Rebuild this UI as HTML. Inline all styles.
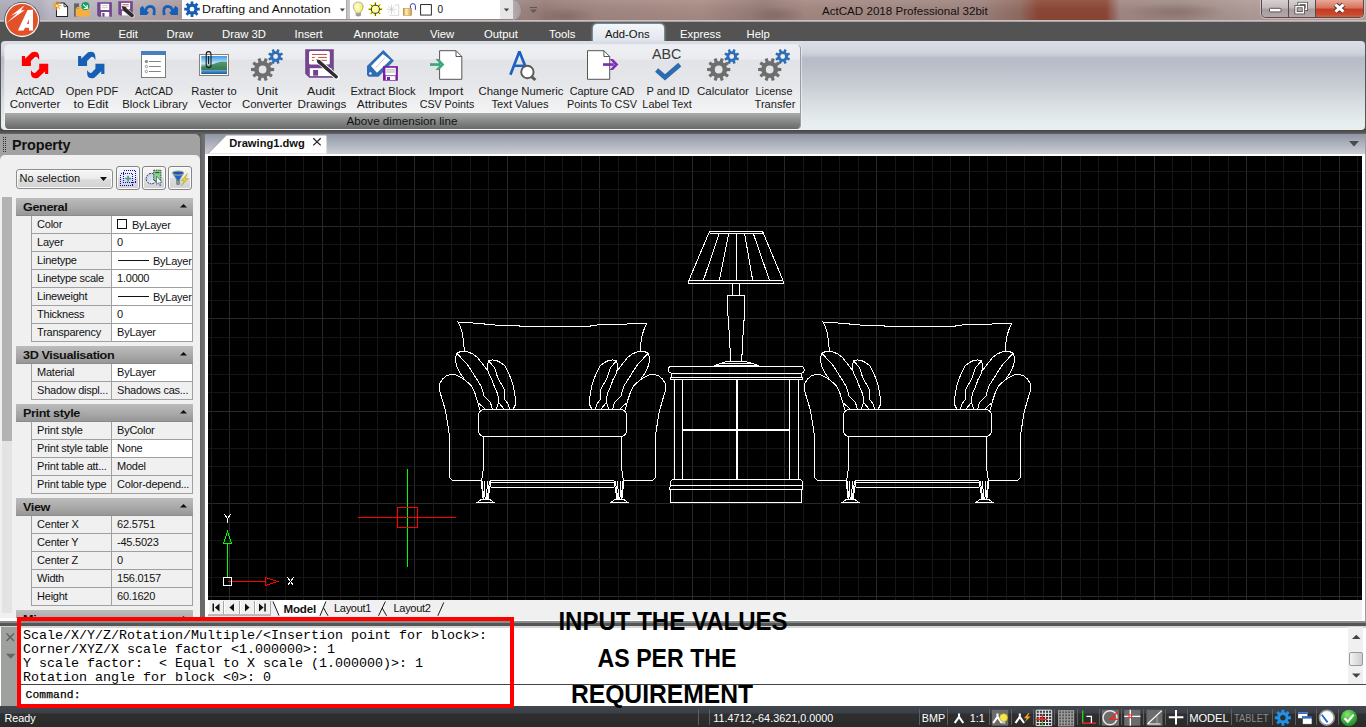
<!DOCTYPE html>
<html><head><meta charset="utf-8"><title>ActCAD 2018 Professional 32bit</title>
<style>
*{box-sizing:border-box;margin:0;padding:0}
html,body{width:1366px;height:727px;overflow:hidden;background:#555;font-family:"Liberation Sans",sans-serif;}
.a{position:absolute}
.t{position:absolute;white-space:nowrap;line-height:1}
svg{position:absolute;overflow:visible}
/* title bar */
#titlebar{left:0;top:0;width:1366px;height:22px;background:
 radial-gradient(ellipse 50px 9px at 1175px 12px,rgba(120,92,88,.45),rgba(120,92,88,0)),
 radial-gradient(ellipse 30px 8px at 565px 16px,rgba(110,85,80,.4),rgba(110,85,80,0)),
 radial-gradient(ellipse 28px 8px at 778px 15px,rgba(110,85,80,.4),rgba(110,85,80,0)),
 linear-gradient(180deg,rgba(255,255,255,.10) 0,rgba(255,255,255,0) 45%,rgba(0,0,0,.04) 100%),
 linear-gradient(90deg,#aba9b6 0px,#adabb7 40px,#b9b8c4 50px,#b7b3bc 100px,#b3a9b0 135px,#ad9ea3 160px,#a8989c 182px,#9a827e 522px,#957a74 545px,#a0857f 600px,#a68a84 700px,#937872 765px,#a28680 805px,#a08680 900px,#9b807a 980px,#8f6a60 1020px,#8a4636 1038px,#8a4636 1106px,#9f8682 1120px,#9d8884 1180px,#ad9995 1250px,#b3a19e 1366px);}
#tbline{left:0;top:20px;width:1366px;height:2px;background:linear-gradient(180deg,#d9cfd0,#9d9294)}
#menuband{left:0;top:22px;width:1366px;height:20px;background:#535353}
.mi{color:#fff;font-size:11.3px;top:28.5px}
#tabact{left:593px;top:24px;width:71px;height:18px;border-radius:4px 4px 0 0;background:linear-gradient(180deg,#f4f7fa 0,#dfe4ec 100%);box-shadow:0 0 2px 1px rgba(170,220,240,.55)}
#ribbon{left:1px;top:41px;width:1364px;height:89px;border-radius:4px;background:linear-gradient(180deg,#dadee6 0,#d6dae2 6px,#cdd1da 13px,#b6bbc7 17.5px,#b9bec9 24px,#c8cdd4 45px,#dde3e5 68px,#e7eeee 82px,#e8efee 89px);}
#group{left:4.6px;top:45px;width:796px;height:84px;border-radius:4px;overflow:hidden;background:linear-gradient(180deg,#eeeff2 0,#ebecef 14px,#e1e3e7 15px,#e6e7ea 40px,#f3f3f4 66px,#f5f5f5 68px);box-shadow:0 0 0 1px rgba(255,255,255,.45);border-right:1px solid #9a9ca2}
#glabel{left:0;top:68px;width:100%;height:16px;background:linear-gradient(180deg,#aaabab 0,#909191 6px,#777878 12px,#6a6a6a 16px);}
.rl{position:absolute;font-size:11px;color:#1a1a1a;text-align:center;line-height:13px;top:85px;transform:translateX(-50%);white-space:nowrap}

#doctabs{left:204.5px;top:134px;width:1161.5px;height:20px;background:linear-gradient(180deg,#8f95a5 0,#a2a7b4 30%,#c0c3cb 80%,#cbcdd2 100%)}
#docwhite{left:204.5px;top:153.5px;width:1161.5px;height:468.5px;background:#fff}
#black{left:208px;top:156px;width:1154px;height:444.6px;background:#000;overflow:hidden}
#laybar{left:208px;top:600px;width:1154px;height:20px;background:#f0f0f0}
.lt{font-size:11px;color:#111;top:602.8px;letter-spacing:-.3px}
#cmdsplit{left:0;top:621px;width:1366px;height:6.5px;background:linear-gradient(180deg,#8b9090 0,#858a8a 1.6px,#565656 2.2px,#555 5px,#d4d4d4 5.2px,#d8d8d8 6.5px)}
#cmdleft{left:0;top:627.3px;width:19px;height:79px;background:#9fa19f;border-left:1.4px solid #fff}
#cmdhist{left:19px;top:627.5px;width:1347px;height:57px;background:#fff}
#cmdline{left:19px;top:684px;width:1347px;height:22.5px;background:#fff;border-top:1px solid #444}
.cm{font-family:"Liberation Mono",monospace;font-size:13.33px;color:#000;left:23px;white-space:pre}
#status{left:0;top:706px;width:1366px;height:21px;background:linear-gradient(180deg,#42474f 0,#3b3f46 7px,#2f2f30 8px,#2a2a2a 100%)}
.st{font-size:10.8px;color:#fff;top:713.2px}
.sep{position:absolute;top:709px;width:1px;height:16px;background:#5e5e62}
.big{position:absolute;font-weight:bold;font-size:25.5px;color:#000;white-space:nowrap;line-height:1}

</style></head><body>
<!-- ===== TITLE BAR ===== -->
<div id="titlebar" class="a"></div>
<div id="tbline" class="a"></div>
<!-- ===== QAT ===== -->
<svg style="left:44px;top:0" width="140" height="22"><g transform="scale(0.11127)">
<!-- new -->
<path d="M112,28 H180 L212,60 V148 H112 Z" fill="#fff" stroke="#222" stroke-width="9"/><path d="M180,28 V60 H212" fill="none" stroke="#222" stroke-width="7"/>
<g stroke="#f0a020" stroke-width="9"><path d="M115,10 V92 M74,51 H156 M86,22 L144,80 M144,22 L86,80"/></g><circle cx="115" cy="51" r="9" fill="#fff3c0"/>
<!-- open -->
<rect x="270" y="30" width="45" height="120" fill="#666"/>
<path d="M285,75 H410 V150 H285 Z" fill="#f5b040"/><path d="M285,75 L300,62 H350 L360,75 Z" fill="#f5b040"/>
<circle cx="372" cy="55" r="36" fill="#12a060"/><path d="M352,40 L388,76 M388,46 V76 H358" stroke="#fff" stroke-width="10" fill="none"/>
<!-- save -->
<path d="M478,20 H610 V150 H492 L478,136 Z" fill="#74468e"/><rect x="508" y="34" width="78" height="56" fill="#fff"/><rect x="520" y="48" width="54" height="7" fill="#bbb"/><rect x="520" y="66" width="54" height="7" fill="#bbb"/><rect x="514" y="108" width="72" height="42" fill="#fff"/><rect x="524" y="116" width="20" height="34" fill="#74468e"/>
<!-- save as -->
<path d="M668,12 H798 V140 H682 L668,126 Z" fill="#74468e"/><rect x="694" y="26" width="80" height="56" fill="#fff"/><rect x="706" y="36" width="56" height="6" fill="#b5432a"/><rect x="706" y="52" width="56" height="6" fill="#b5432a"/><rect x="700" y="100" width="70" height="40" fill="#fff"/>
<path d="M722,80 L792,140" stroke="#d8d0d8" stroke-width="46" stroke-linecap="round"/><path d="M724,82 L790,138" stroke="#2a2a2a" stroke-width="34" stroke-linecap="round"/><path d="M698,54 L742,66 L712,96 Z" fill="#2a2a2a"/>
</g></svg>
<!-- workspace combo -->
<div class="a" style="left:182px;top:0;width:165px;height:19.3px;background:#fff;border-right:1px solid #aaa"></div>
<div class="a" style="left:347px;top:0;width:3px;height:19.3px;background:#c4c4c4"></div>
<div class="a" style="left:350px;top:0;width:150px;height:19.3px;background:#fff"></div>
<div class="a" style="left:500px;top:0;width:13px;height:19.3px;background:#e6e6e6"></div>
<div class="a" style="left:513px;top:0;width:9px;height:19.5px;border-radius:0 9px 9px 0/0 10px 10px 0;background:linear-gradient(90deg,#b4aab0,#a89a9c);border-right:1px solid #8d8286"></div>
<div class="t" style="left:202.3px;top:4.2px;font-size:11.8px;color:#111;letter-spacing:-.05px;transform:scaleX(1.052);transform-origin:0 0">Drafting and Annotation</div>
<div class="t" style="left:437.5px;top:5px;font-size:10px;color:#111">0</div>
<svg style="left:338px;top:7px" width="200" height="8"><path d="M1.8,1.5 H7 L4.4,4.5 Z" fill="#444"/><path d="M165.8,1.5 H171.2 L168.5,4.5 Z" fill="#444"/><path d="M192,0 H199 V1 H192 Z M192,2.5 H199 L195.5,6 Z" fill="#5a5a5a"/></svg>
<svg style="left:134px;top:0" width="50" height="22"><g transform="scale(0.052715)" fill="#1560b5">
<path d="M115,285 L115,150 L165,110 L215,195 L285,235 L240,285 Z"/><path d="M215,215 Q235,122 310,120 Q388,125 385,215 L378,285" fill="none" stroke="#1560b5" stroke-width="52"/>
<g transform="translate(950,0) scale(-1,1)"><path d="M115,285 L115,150 L165,110 L215,195 L285,235 L240,285 Z"/><path d="M215,215 Q235,122 310,120 Q388,125 385,215 L378,285" fill="none" stroke="#1560b5" stroke-width="52"/></g>
</g></svg>
<svg style="left:0;top:0" width="210" height="20"><path d="M190.59,3.78 L190.61,1.42 L193.39,1.42 L193.41,3.78 L194.83,4.37 L196.52,2.72 L198.48,4.68 L196.83,6.37 L197.42,7.79 L199.78,7.81 L199.78,10.59 L197.42,10.61 L196.83,12.03 L198.48,13.72 L196.52,15.68 L194.83,14.03 L193.41,14.62 L193.39,16.98 L190.61,16.98 L190.59,14.62 L189.17,14.03 L187.48,15.68 L185.52,13.72 L187.17,12.03 L186.58,10.61 L184.22,10.59 L184.22,7.81 L186.58,7.79 L187.17,6.37 L185.52,4.68 L187.48,2.72 L189.17,4.37 Z M194.40,9.20 A2.4,2.4 0 1,0 189.60,9.20 A2.4,2.4 0 1,0 194.40,9.20 Z" fill="#1560b5" fill-rule="evenodd"/></svg><!--QAT_GEAR--><svg style="left:346px;top:0" width="110" height="22"><defs><radialGradient id="bulb" cx=".4" cy=".35" r=".7"><stop offset="0" stop-color="#ffffe8"/><stop offset=".6" stop-color="#f4f07a"/><stop offset="1" stop-color="#d8c840"/></radialGradient><linearGradient id="lockg" x1="0" y1="0" x2="1" y2="0"><stop offset="0" stop-color="#c89030"/><stop offset=".35" stop-color="#fff0c8"/><stop offset="1" stop-color="#c89838"/></linearGradient></defs>
<g transform="scale(0.080515)">
<path d="M152,25 Q215,28 214,88 Q212,120 182,150 V190 Q152,215 124,190 V150 Q92,120 90,88 Q90,28 152,25 Z" fill="url(#bulb)" stroke="#8a8a70" stroke-width="7"/><rect x="126" y="158" width="54" height="40" rx="8" fill="#8c8c8c"/><path d="M126,172 H180 M126,186 H180" stroke="#d8d8d8" stroke-width="5"/>
<g stroke="#111" stroke-width="9" fill="none"><path d="M365,28 V202 M278,115 H452 M305,55 L425,175 M425,55 L305,175" stroke="#ffff00" stroke-width="22"/><path d="M365,32 V198 M282,115 H448 M309,59 L421,171 M421,59 L309,171"/></g><circle cx="365" cy="115" r="50" fill="#ffff60" stroke="#111" stroke-width="10"/><circle cx="365" cy="115" r="38" fill="#fffff0" opacity=".55"/>
<g stroke="#c2c2c2" stroke-width="8" fill="none"><path d="M565,55 V175 M505,115 H625 M522,72 L608,158 M608,72 L522,158"/><path d="M610,62 H655 V190 H540"/></g>
<path d="M800,105 V70 Q802,45 830,45 Q862,47 862,72 V122" fill="none" stroke="#2020a0" stroke-width="11"/><rect x="710" y="102" width="106" height="90" fill="url(#lockg)" stroke="#b07820" stroke-width="5"/>
<rect x="927" y="57" width="133" height="130" fill="#fff" stroke="#111" stroke-width="11"/>
</g></svg>


<div class="t" style="left:822px;top:4.9px;font-size:11.6px;color:#111">ActCAD 2018 Professional 32bit</div>
<!-- window buttons -->
<div class="a" style="left:1260.5px;top:0;width:103px;height:17.5px;border-radius:0 0 5px 5px;border:1px solid #5a4a4a;border-top:none;overflow:hidden;box-shadow:0 0 0 1px rgba(255,255,255,.35)">
<div class="a" style="left:0;top:0;width:27px;height:17.5px;background:linear-gradient(180deg,#d8d0d2 0,#c2b8ba 45%,#a89c9e 50%,#b5a9ab 100%);border-right:1px solid #5a4a4a"></div>
<div class="a" style="left:27px;top:0;width:27.5px;height:17.5px;background:linear-gradient(180deg,#d8d0d2 0,#c2b8ba 45%,#a89c9e 50%,#b5a9ab 100%);border-right:1px solid #5a4a4a"></div>
<div class="a" style="left:54.5px;top:0;width:48px;height:17.5px;background:linear-gradient(180deg,#e8a898 0,#d8705a 45%,#c23a22 50%,#c84a30 80%,#d86a48 100%)"></div>
</div>
<svg style="left:1260px;top:0" width="104" height="18"><rect x="9.5" y="8.3" width="11.5" height="3.6" rx=".8" fill="#fff" stroke="#4a4444" stroke-width=".9"/>
<rect x="39" y="3.4" width="7.4" height="6" fill="none" stroke="#4a4444" stroke-width="3"/><rect x="39" y="3.4" width="7.4" height="6" fill="none" stroke="#fff" stroke-width="1.5"/>
<rect x="36" y="6.6" width="7.4" height="6.2" fill="#b4a8aa" stroke="#4a4444" stroke-width="3"/><rect x="36" y="6.6" width="7.4" height="6.2" fill="none" stroke="#fff" stroke-width="1.5"/>
<path d="M75.5,4.6 L83.5,11.6 M83.5,4.6 L75.5,11.6" stroke="#5a2a24" stroke-width="5"/><path d="M75.5,4.6 L83.5,11.6 M83.5,4.6 L75.5,11.6" stroke="#fff" stroke-width="3.1"/></svg>

<!-- ===== MENU ===== -->
<div id="menuband" class="a"></div>
<div id="tabact" class="a"></div>
<div class="t mi" style="left:60px">Home</div>
<div class="t mi" style="left:118.5px">Edit</div>
<div class="t mi" style="left:166.5px">Draw</div>
<div class="t mi" style="left:222px">Draw 3D</div>
<div class="t mi" style="left:294.5px">Insert</div>
<div class="t mi" style="left:353.5px">Annotate</div>
<div class="t mi" style="left:430px">View</div>
<div class="t mi" style="left:484px">Output</div>
<div class="t mi" style="left:549px">Tools</div>
<div class="t mi" style="left:605px;color:#111">Add-Ons</div>
<div class="t mi" style="left:680px">Express</div>
<div class="t mi" style="left:746.5px">Help</div>
<!-- ===== RIBBON ===== -->
<div class="a" style="left:0;top:129px;width:1366px;height:5.3px;background:linear-gradient(180deg,#454545 0,#4a4a4a 40%,#666 100%)"></div>
<div id="ribbon" class="a"></div>
<div id="group" class="a"><div id="glabel" class="a"></div></div>
<div class="rl" style="left:34.8px;top:85px;transform:translateX(-50%) scaleX(0.984)">ActCAD</div>
<div class="rl" style="left:35.1px;top:98px;transform:translateX(-50%) scaleX(1.046)">Converter</div>
<div class="rl" style="left:91.5px;top:85px;transform:translateX(-50%) scaleX(1.006)">Open PDF</div>
<div class="rl" style="left:91.2px;top:98px;transform:translateX(-50%) scaleX(1.125)">to Edit</div>
<div class="rl" style="left:154.1px;top:85px;transform:translateX(-50%) scaleX(0.969)">ActCAD</div>
<div class="rl" style="left:154.5px;top:98px;transform:translateX(-50%) scaleX(1.030)">Block Library</div>
<div class="rl" style="left:214.0px;top:85px;transform:translateX(-50%) scaleX(1.015)">Raster to</div>
<div class="rl" style="left:214.6px;top:98px;transform:translateX(-50%) scaleX(1.061)">Vector</div>
<div class="rl" style="left:267.0px;top:85px;transform:translateX(-50%) scaleX(1.104)">Unit</div>
<div class="rl" style="left:267.0px;top:98px;transform:translateX(-50%) scaleX(1.037)">Converter</div>
<div class="rl" style="left:321.1px;top:85px;transform:translateX(-50%) scaleX(1.120)">Audit</div>
<div class="rl" style="left:321.6px;top:98px;transform:translateX(-50%) scaleX(1.064)">Drawings</div>
<div class="rl" style="left:382.6px;top:85px;transform:translateX(-50%) scaleX(1.016)">Extract Block</div>
<div class="rl" style="left:382.4px;top:98px;transform:translateX(-50%) scaleX(1.091)">Attributes</div>
<div class="rl" style="left:445.8px;top:85px;transform:translateX(-50%) scaleX(1.109)">Import</div>
<div class="rl" style="left:446.5px;top:98px;transform:translateX(-50%) scaleX(0.971)">CSV Points</div>
<div class="rl" style="left:520.8px;top:85px;transform:translateX(-50%) scaleX(1.029)">Change Numeric</div>
<div class="rl" style="left:520.2px;top:98px;transform:translateX(-50%) scaleX(1.017)">Text Values</div>
<div class="rl" style="left:601.8px;top:85px;transform:translateX(-50%) scaleX(0.989)">Capture CAD</div>
<div class="rl" style="left:602.2px;top:98px;transform:translateX(-50%) scaleX(0.987)">Points To CSV</div>
<div class="rl" style="left:667.8px;top:85px;transform:translateX(-50%) scaleX(1.009)">P and ID</div>
<div class="rl" style="left:667.1px;top:98px;transform:translateX(-50%) scaleX(0.987)">Label Text</div>
<div class="rl" style="left:723.4px;top:85px;transform:translateX(-50%) scaleX(1.048)">Calculator</div>
<div class="rl" style="left:774.3px;top:85px;transform:translateX(-50%) scaleX(0.970)">License</div>
<div class="rl" style="left:774.8px;top:98px;transform:translateX(-50%) scaleX(1.011)">Transfer</div>
<div class="rl" style="left:402.4px;top:115px;color:#111;transform:translateX(-50%) scaleX(1.06)">Above dimension line</div>
<svg class="a" style="left:0;top:0" width="1366" height="135">
<g transform="translate(10,44) scale(0.08347)" fill="#ff0000"><path d="M142,145 L180,145 L180,178 L262,100 Q300,84 330,102 Q356,128 348,192 Q328,146 300,156 L250,205 L250,265 L142,265 Z"/><path d="M142,145 L180,145 L180,178 L262,100 Q300,84 330,102 Q356,128 348,192 Q328,146 300,156 L250,205 L250,265 L142,265 Z" transform="rotate(180 300 251.5)"/></g>
<g transform="translate(66.2,44) scale(0.08347)" fill="#1560b5"><path d="M142,145 L180,145 L180,178 L262,100 Q300,84 330,102 Q356,128 348,192 Q328,146 300,156 L250,205 L250,265 L142,265 Z"/><path d="M142,145 L180,145 L180,178 L262,100 Q300,84 330,102 Q356,128 348,192 Q328,146 300,156 L250,205 L250,265 L142,265 Z" transform="rotate(180 300 251.5)"/></g>
<rect x="141.5" y="51.5" width="24" height="26" fill="#fff" stroke="#7a7a7a" stroke-width="1"/>
<rect x="141" y="51" width="25" height="4" fill="#4a7eb8"/>
<circle cx="146.4" cy="61.5" r="1.2" fill="#8a8a8a" stroke="#777" stroke-width=".7"/>
<rect x="149" y="61.1" width="11.8" height=".9" fill="#777"/>
<circle cx="146.4" cy="66.5" r="1.2" fill="#fff" stroke="#777" stroke-width=".7"/>
<rect x="149" y="66.1" width="11.8" height=".9" fill="#777"/>
<circle cx="146.4" cy="71.5" r="1.2" fill="#fff" stroke="#777" stroke-width=".7"/>
<rect x="149" y="71.1" width="11.8" height=".9" fill="#777"/>
<defs><linearGradient id="sky" x1="0" y1="0" x2="0" y2="1"><stop offset="0" stop-color="#3d9ae6"/><stop offset=".42" stop-color="#c4e6f7"/><stop offset=".62" stop-color="#3f8456"/><stop offset=".78" stop-color="#3a7a66"/><stop offset=".8" stop-color="#5aa0d0"/><stop offset="1" stop-color="#1d5a9c"/></linearGradient></defs>
<rect x="199.5" y="54.5" width="29" height="21" fill="#fff" stroke="#8a807a" stroke-width="1"/>
<rect x="201.2" y="56" width="25.8" height="18" fill="url(#sky)"/>
<path d="M201.2,68 Q210,66 216,63 Q222,61 227,62 L227,68 Z" fill="#3f8456" opacity=".85"/>
<path d="M206.2,65 V54.5 Q206.2,51.6 208.6,51.6 Q211,51.6 211,54.5 V65.5 Q211,67.6 208.8,67.6 Q206.4,67.6 206.2,65 M208.6,56 V64" fill="none" stroke="#1a1a1a" stroke-width="1.1"/>
<path d="M263.60,61.16 L264.72,57.99 L267.65,58.95 L266.69,62.16 L268.31,63.34 L271.08,61.44 L272.89,63.93 L270.22,65.97 L270.84,67.87 L274.20,67.96 L274.20,71.04 L270.84,71.13 L270.22,73.03 L272.89,75.07 L271.08,77.56 L268.31,75.66 L266.69,76.84 L267.65,80.05 L264.72,81.01 L263.60,77.84 L261.60,77.84 L260.48,81.01 L257.55,80.05 L258.51,76.84 L256.89,75.66 L254.12,77.56 L252.31,75.07 L254.98,73.03 L254.36,71.13 L251.00,71.04 L251.00,67.96 L254.36,67.87 L254.98,65.97 L252.31,63.93 L254.12,61.44 L256.89,63.34 L258.51,62.16 L257.55,58.95 L260.48,57.99 L261.60,61.16 Z M266.50,69.50 A3.9,3.9 0 1,0 258.70,69.50 A3.9,3.9 0 1,0 266.50,69.50 Z" fill="#6e6e6e" fill-rule="evenodd"/><path d="M276.39,51.26 L277.32,49.10 L279.62,50.05 L278.75,52.24 L279.86,53.35 L282.05,52.48 L283.00,54.78 L280.84,55.71 L280.84,57.29 L283.00,58.22 L282.05,60.52 L279.86,59.65 L278.75,60.76 L279.62,62.95 L277.32,63.90 L276.39,61.74 L274.81,61.74 L273.88,63.90 L271.58,62.95 L272.45,60.76 L271.34,59.65 L269.15,60.52 L268.20,58.22 L270.36,57.29 L270.36,55.71 L268.20,54.78 L269.15,52.48 L271.34,53.35 L272.45,52.24 L271.58,50.05 L273.88,49.10 L274.81,51.26 Z M278.00,56.50 A2.4,2.4 0 1,0 273.20,56.50 A2.4,2.4 0 1,0 278.00,56.50 Z" fill="#2f6eb5" fill-rule="evenodd"/>
<path d="M305.2,49.2 H333.8 V77.8 H309.2 L305.2,73.8 Z" fill="#74468e"/>
<rect x="309" y="51.1" width="20.8" height="13.4" rx="1.5" fill="#fff"/>
<rect x="311.9" y="53.949999999999996" width="15" height=".9" fill="#b5432a"/>
<rect x="311.9" y="56.949999999999996" width="15" height=".9" fill="#b5432a"/>
<rect x="311.9" y="59.849999999999994" width="15" height=".9" fill="#b5432a"/>
<rect x="309.8" y="68.2" width="21.7" height="7.9" fill="#fff"/>
<rect x="313.1" y="70" width="5" height="5.7" fill="#74468e"/>
<path d="M316.5,59.4 L336.9,77.4" stroke="#fff" stroke-width="5.2" stroke-linecap="round"/>
<path d="M318.8,61.6 L336.2,76.8" stroke="#2e2e2e" stroke-width="3.4" stroke-linecap="round"/>
<path d="M316.2,59 L320.5,60.8 L318.3,63.2 Z" fill="#2e2e2e"/>
<path d="M383.3,50 L393.9,60.7 L378.5,76.7 H368.7 L367,74.9 V65.9 Z" fill="#2f6db5"/>
<path d="M382.9,54 L390.4,59.9 L377,72.8 L371,66.1 Z" fill="#fff"/>
<path d="M385,57.8 L375.4,68.2" stroke="#c9c9c9" stroke-width="1"/>
<circle cx="370.4" cy="73.4" r="1.2" fill="#fff"/>
<rect x="383" y="66.1" width="14.9" height="14.6" fill="#7a1fa2"/>
<rect x="385.4" y="67.8" width="10.4" height="7.5" fill="#fff"/>
<rect x="386.3" y="69.5" width="8.6" height=".8" fill="#999"/><rect x="386.3" y="71.6" width="8.6" height=".8" fill="#999"/>
<rect x="385.8" y="76.1" width="9.6" height="3.9" fill="#fff"/><rect x="387" y="77" width="3" height="3" fill="#7a1fa2"/>
<path d="M439.6,50.7 H456.0 L461.8,56.5 V79.3 H439.6 Z" fill="#fff" stroke="#555" stroke-width="1"/><path d="M456.0,50.7 V56.5 H461.8" fill="none" stroke="#555" stroke-width="1"/>
<path d="M430,63.2 H440 V65.9 H430 Z" fill="#3fa57a"/><path d="M435.5,59 H439 L444.4,64.5 L439,69.9 H435.5 L440.5,64.5 Z" fill="#3fa57a"/>
<path d="M510.4,74.7 L519.4,51.6 L527.6,72" fill="none" stroke="#1f5fbf" stroke-width="2.7" stroke-linejoin="bevel"/>
<path d="M514,65.8 H526" stroke="#1f5fbf" stroke-width="2.5"/>
<circle cx="527.4" cy="72" r="6.2" fill="#fff" stroke="#5a5a5a" stroke-width="1.9"/>
<path d="M531.8,76.8 L535.4,80" stroke="#5a5a5a" stroke-width="3"/>
<path d="M587.5,50.7 H603.9 L609.7,56.5 V79.3 H587.5 Z" fill="#fff" stroke="#555" stroke-width="1"/><path d="M603.9,50.7 V56.5 H609.7" fill="none" stroke="#555" stroke-width="1"/>
<path d="M603,63.2 H613.8 V65.9 H603 Z" fill="#7b2fb5"/><path d="M609.6,59 H613 L618.4,64.5 L613,69.9 H609.6 L614.6,64.5 Z" fill="#7b2fb5"/>
<text x="652" y="59.4" font-family="Liberation Sans, sans-serif" font-size="14.5" fill="#3a3a3a" textLength="29.4" lengthAdjust="spacingAndGlyphs">ABC</text>
<path d="M656.6,69.9 L665,77.3 L679.8,64.6" fill="none" stroke="#2e6cb0" stroke-width="4.7"/>
<path d="M719.70,61.16 L720.82,57.99 L723.75,58.95 L722.79,62.16 L724.41,63.34 L727.18,61.44 L728.99,63.93 L726.32,65.97 L726.94,67.87 L730.30,67.96 L730.30,71.04 L726.94,71.13 L726.32,73.03 L728.99,75.07 L727.18,77.56 L724.41,75.66 L722.79,76.84 L723.75,80.05 L720.82,81.01 L719.70,77.84 L717.70,77.84 L716.58,81.01 L713.65,80.05 L714.61,76.84 L712.99,75.66 L710.22,77.56 L708.41,75.07 L711.08,73.03 L710.46,71.13 L707.10,71.04 L707.10,67.96 L710.46,67.87 L711.08,65.97 L708.41,63.93 L710.22,61.44 L712.99,63.34 L714.61,62.16 L713.65,58.95 L716.58,57.99 L717.70,61.16 Z M722.60,69.50 A3.9,3.9 0 1,0 714.80,69.50 A3.9,3.9 0 1,0 722.60,69.50 Z" fill="#6e6e6e" fill-rule="evenodd"/><path d="M732.49,51.26 L733.42,49.10 L735.72,50.05 L734.85,52.24 L735.96,53.35 L738.15,52.48 L739.10,54.78 L736.94,55.71 L736.94,57.29 L739.10,58.22 L738.15,60.52 L735.96,59.65 L734.85,60.76 L735.72,62.95 L733.42,63.90 L732.49,61.74 L730.91,61.74 L729.98,63.90 L727.68,62.95 L728.55,60.76 L727.44,59.65 L725.25,60.52 L724.30,58.22 L726.46,57.29 L726.46,55.71 L724.30,54.78 L725.25,52.48 L727.44,53.35 L728.55,52.24 L727.68,50.05 L729.98,49.10 L730.91,51.26 Z M734.10,56.50 A2.4,2.4 0 1,0 729.30,56.50 A2.4,2.4 0 1,0 734.10,56.50 Z" fill="#2f6eb5" fill-rule="evenodd"/>
<path d="M770.70,61.16 L771.82,57.99 L774.75,58.95 L773.79,62.16 L775.41,63.34 L778.18,61.44 L779.99,63.93 L777.32,65.97 L777.94,67.87 L781.30,67.96 L781.30,71.04 L777.94,71.13 L777.32,73.03 L779.99,75.07 L778.18,77.56 L775.41,75.66 L773.79,76.84 L774.75,80.05 L771.82,81.01 L770.70,77.84 L768.70,77.84 L767.58,81.01 L764.65,80.05 L765.61,76.84 L763.99,75.66 L761.22,77.56 L759.41,75.07 L762.08,73.03 L761.46,71.13 L758.10,71.04 L758.10,67.96 L761.46,67.87 L762.08,65.97 L759.41,63.93 L761.22,61.44 L763.99,63.34 L765.61,62.16 L764.65,58.95 L767.58,57.99 L768.70,61.16 Z M773.60,69.50 A3.9,3.9 0 1,0 765.80,69.50 A3.9,3.9 0 1,0 773.60,69.50 Z" fill="#6e6e6e" fill-rule="evenodd"/><path d="M783.49,51.26 L784.42,49.10 L786.72,50.05 L785.85,52.24 L786.96,53.35 L789.15,52.48 L790.10,54.78 L787.94,55.71 L787.94,57.29 L790.10,58.22 L789.15,60.52 L786.96,59.65 L785.85,60.76 L786.72,62.95 L784.42,63.90 L783.49,61.74 L781.91,61.74 L780.98,63.90 L778.68,62.95 L779.55,60.76 L778.44,59.65 L776.25,60.52 L775.30,58.22 L777.46,57.29 L777.46,55.71 L775.30,54.78 L776.25,52.48 L778.44,53.35 L779.55,52.24 L778.68,50.05 L780.98,49.10 L781.91,51.26 Z M785.10,56.50 A2.4,2.4 0 1,0 780.30,56.50 A2.4,2.4 0 1,0 785.10,56.50 Z" fill="#2f6eb5" fill-rule="evenodd"/>
</svg>
<!-- ===== LOGO ===== -->
<svg style="left:0;top:0" width="60" height="44"><g transform="scale(0.060533)">
<circle cx="365" cy="330" r="296" fill="#4a4a4a"/>
<circle cx="365" cy="330" r="284" fill="#f4f4f4"/>
<circle cx="365" cy="330" r="262" fill="#e2512a"/>
<path d="M295,505 L455,165 L545,160 L545,505 L480,505 L480,460 L415,460 L390,505 Z M446,396 L478,396 L478,318 Z" fill="#fff" fill-rule="evenodd"/>
<path d="M100,385 L290,215 L180,262 L405,88 L345,172 L412,165 Z" fill="#fff"/>
</g></svg>

<div class="a" style="left:0;top:0;width:208px;height:618.2px;overflow:hidden"><div class="a" style="left:0;top:134px;width:200px;height:30px;background:#a2a2a2;border-radius:0 5px 0 0"></div>
<div class="a" style="left:0;top:155px;width:200px;height:464px;background:#f0f0f0;border-radius:5px 5px 0 0"></div>
<div class="a" style="left:3px;top:137px;width:3px;height:15px;background:repeating-linear-gradient(180deg,#333 0,#333 1px,transparent 1px,transparent 2px),transparent;"></div>
<div class="a" style="left:4px;top:137px;width:1px;height:15px;background:#a2a2a2"></div>
<div class="t" style="left:12px;top:138px;font-size:14.4px;font-weight:bold;color:#111;letter-spacing:-.1px">Property</div>
<div class="a" style="left:16px;top:168.5px;width:97px;height:20px;border:1px solid #8e8e8e;border-radius:3px;background:linear-gradient(180deg,#f6f6f6 0,#ebebeb 50%,#dddddd 51%,#d2d2d2 100%);box-shadow:inset 0 0 0 1px #fbfbfb"></div>
<div class="t" style="left:19.6px;top:173px;font-size:11px;color:#111">No selection</div>
<svg style="left:100px;top:177px" width="8" height="5"><path d="M0,0 H7 L3.5,4 Z" fill="#111"/></svg>
<div class="a" style="left:116.2px;top:166px;width:23.6px;height:23.6px;border:1.1px solid #848484;border-radius:3px;background:linear-gradient(180deg,#f6f6f6 0,#ebebeb 50%,#dddddd 51%,#d2d2d2 100%);box-shadow:inset 0 0 0 1px #fbfbfb"></div>
<div class="a" style="left:142.2px;top:166px;width:23.6px;height:23.6px;border:1.1px solid #848484;border-radius:3px;background:linear-gradient(180deg,#f6f6f6 0,#ebebeb 50%,#dddddd 51%,#d2d2d2 100%);box-shadow:inset 0 0 0 1px #fbfbfb"></div>
<div class="a" style="left:168.3px;top:166px;width:23.6px;height:23.6px;border:1.1px solid #848484;border-radius:3px;background:linear-gradient(180deg,#f6f6f6 0,#ebebeb 50%,#dddddd 51%,#d2d2d2 100%);box-shadow:inset 0 0 0 1px #fbfbfb"></div>
<svg style="left:0;top:0" width="200" height="195"><defs><linearGradient id="pc" x1="0" y1="0" x2="1" y2="1"><stop offset="0" stop-color="#b8c4ec"/><stop offset="1" stop-color="#ffffff"/></linearGradient></defs><g fill="none" stroke="#0a0ac0" stroke-width="1" stroke-dasharray="1,1" shape-rendering="crispEdges"><rect x="120.5" y="173.5" width="12" height="12"/><rect x="123.5" y="170.5" width="12" height="12"/></g><path d="M125.3,178.6 H131 M128.1,175.8 V181.5" stroke="#2a9a9a" stroke-width="1.5"/><path d="M128.1,177.8 V179.5 M127.2,178.6 H129" stroke="#8a8a8a" stroke-width="1"/><circle cx="151.4" cy="178.6" r="5.2" fill="url(#pc)" stroke="#1a1a2a" stroke-width="1" stroke-dasharray="1.6,1.1"/><rect x="153.7" y="170.2" width="7.2" height="10.4" fill="#86d486" stroke="#1a2a3a" stroke-width=".9" stroke-dasharray="1.4,.9"/><path d="M155.2,172.6 H159.4" stroke="#2a3a3a" stroke-width="1"/><path d="M156.5,176 V184.6 L158.5,182.8 L159.8,185.8 L161,185.3 L159.8,182.4 L162,182.2 Z" fill="#f4f6fa" stroke="#56708a" stroke-width=".8"/><path d="M172.8,173.4 Q178.1,176.6 183.4,173.4 L179.6,179.6 V184.2 Q178.1,185.4 176.6,184.2 V179.6 Z" fill="#1a64c4" stroke="#8a8a8a" stroke-width=".9"/><ellipse cx="178.1" cy="173.1" rx="5.4" ry="2" fill="#0e58b8" stroke="#9a9a9a" stroke-width="1.1"/><rect x="176.6" y="180.5" width="3" height="4" fill="#8e8e8e"/><path d="M187.3,173.6 L181.6,180.6 H184.4 L181.4,185.8 L188,178.6 H185.2 Z" fill="#f8d428" stroke="#8aa020" stroke-width=".5"/></svg>
<div class="a" style="left:2px;top:197px;width:9.5px;height:416px;background:#e3e3e3"></div>
<div class="a" style="left:2px;top:197px;width:9.5px;height:244px;background:#b3b3b3"></div>
<div class="a" style="left:16px;top:197.5px;width:176.5px;height:18px;background:linear-gradient(180deg,#bcbcbc 0,#a9a9a9 55%,#979797 100%);border-bottom:1px solid #8b8b8b"></div>
<div class="t" style="left:22.5px;top:200.7px;font-size:11.6px;font-weight:bold;color:#111;letter-spacing:-.35px;transform:scaleX(1.09);transform-origin:0 0">General</div>
<svg style="left:180px;top:203.5px" width="8" height="4"><path d="M0,3.6 L3.5,0 L7,3.6 Z" fill="#111"/></svg>
<div class="a" style="left:31px;top:215.5px;width:161.5px;height:126px;background:#a0a0a0"></div>
<div class="a" style="left:32px;top:215.5px;width:79px;height:17px;background:#f0f0f0"></div>
<div class="a" style="left:112px;top:215.5px;width:79.5px;height:17px;background:#fff"></div>
<div class="t" style="left:37.1px;top:218.5px;font-size:11px;color:#111;letter-spacing:-.25px">Color</div>
<div class="a" style="left:116.5px;top:219.0px;width:10px;height:10px;border:1px solid #111;background:#fff"></div>
<div class="t" style="left:132px;top:220.0px;font-size:11px;color:#111;letter-spacing:-.25px">ByLayer</div>
<div class="a" style="left:32px;top:233.5px;width:79px;height:17px;background:#f0f0f0"></div>
<div class="a" style="left:112px;top:233.5px;width:79.5px;height:17px;background:#fff"></div>
<div class="t" style="left:37.1px;top:236.5px;font-size:11px;color:#111;letter-spacing:-.25px">Layer</div>
<div class="t" style="left:117.1px;top:236.5px;font-size:11px;color:#111;letter-spacing:-.25px">0</div>
<div class="a" style="left:32px;top:251.5px;width:79px;height:17px;background:#f0f0f0"></div>
<div class="a" style="left:112px;top:251.5px;width:79.5px;height:17px;background:#fff"></div>
<div class="t" style="left:37.1px;top:254.5px;font-size:11px;color:#111;letter-spacing:-.25px">Linetype</div>
<div class="a" style="left:117.5px;top:259.5px;width:31px;height:1px;background:#111"></div>
<div class="t" style="left:153px;top:256.0px;font-size:11px;color:#111;letter-spacing:-.25px">ByLayer</div>
<div class="a" style="left:32px;top:269.5px;width:79px;height:17px;background:#f0f0f0"></div>
<div class="a" style="left:112px;top:269.5px;width:79.5px;height:17px;background:#fff"></div>
<div class="t" style="left:37.1px;top:272.5px;font-size:11px;color:#111;letter-spacing:-.25px">Linetype scale</div>
<div class="t" style="left:117.1px;top:272.5px;font-size:11px;color:#111;letter-spacing:-.25px">1.0000</div>
<div class="a" style="left:32px;top:287.5px;width:79px;height:17px;background:#f0f0f0"></div>
<div class="a" style="left:112px;top:287.5px;width:79.5px;height:17px;background:#fff"></div>
<div class="t" style="left:37.1px;top:290.5px;font-size:11px;color:#111;letter-spacing:-.25px">Lineweight</div>
<div class="a" style="left:117.5px;top:295.5px;width:31px;height:1px;background:#111"></div>
<div class="t" style="left:153px;top:292.0px;font-size:11px;color:#111;letter-spacing:-.25px">ByLayer</div>
<div class="a" style="left:32px;top:305.5px;width:79px;height:17px;background:#f0f0f0"></div>
<div class="a" style="left:112px;top:305.5px;width:79.5px;height:17px;background:#fff"></div>
<div class="t" style="left:37.1px;top:308.5px;font-size:11px;color:#111;letter-spacing:-.25px">Thickness</div>
<div class="t" style="left:117.1px;top:308.5px;font-size:11px;color:#111;letter-spacing:-.25px">0</div>
<div class="a" style="left:32px;top:323.5px;width:79px;height:17px;background:#f0f0f0"></div>
<div class="a" style="left:112px;top:323.5px;width:79.5px;height:17px;background:#fff"></div>
<div class="t" style="left:37.1px;top:326.5px;font-size:11px;color:#111;letter-spacing:-.25px">Transparency</div>
<div class="t" style="left:117.1px;top:326.5px;font-size:11px;color:#111;letter-spacing:-.25px">ByLayer</div>
<div class="a" style="left:16px;top:345.5px;width:176.5px;height:18px;background:linear-gradient(180deg,#bcbcbc 0,#a9a9a9 55%,#979797 100%);border-bottom:1px solid #8b8b8b"></div>
<div class="t" style="left:22.5px;top:348.7px;font-size:11.6px;font-weight:bold;color:#111;letter-spacing:-.35px;transform:scaleX(1.09);transform-origin:0 0">3D Visualisation</div>
<svg style="left:180px;top:351.5px" width="8" height="4"><path d="M0,3.6 L3.5,0 L7,3.6 Z" fill="#111"/></svg>
<div class="a" style="left:31px;top:363.5px;width:161.5px;height:36px;background:#a0a0a0"></div>
<div class="a" style="left:32px;top:363.5px;width:79px;height:17px;background:#f0f0f0"></div>
<div class="a" style="left:112px;top:363.5px;width:79.5px;height:17px;background:#fff"></div>
<div class="t" style="left:37.1px;top:366.5px;font-size:11px;color:#111;letter-spacing:-.25px">Material</div>
<div class="t" style="left:117.1px;top:366.5px;font-size:11px;color:#111;letter-spacing:-.25px">ByLayer</div>
<div class="a" style="left:32px;top:381.5px;width:79px;height:17px;background:#f0f0f0"></div>
<div class="a" style="left:112px;top:381.5px;width:79.5px;height:17px;background:#f0f0f0"></div>
<div class="t" style="left:37.1px;top:384.5px;font-size:11px;color:#111;letter-spacing:-.25px">Shadow displ...</div>
<div class="t" style="left:117.1px;top:384.5px;font-size:11px;color:#111;letter-spacing:-.25px">Shadows cas...</div>
<div class="a" style="left:16px;top:403.5px;width:176.5px;height:18px;background:linear-gradient(180deg,#bcbcbc 0,#a9a9a9 55%,#979797 100%);border-bottom:1px solid #8b8b8b"></div>
<div class="t" style="left:22.5px;top:406.7px;font-size:11.6px;font-weight:bold;color:#111;letter-spacing:-.35px;transform:scaleX(1.09);transform-origin:0 0">Print style</div>
<svg style="left:180px;top:409.5px" width="8" height="4"><path d="M0,3.6 L3.5,0 L7,3.6 Z" fill="#111"/></svg>
<div class="a" style="left:31px;top:421.5px;width:161.5px;height:72px;background:#a0a0a0"></div>
<div class="a" style="left:32px;top:421.5px;width:79px;height:17px;background:#f0f0f0"></div>
<div class="a" style="left:112px;top:421.5px;width:79.5px;height:17px;background:#f0f0f0"></div>
<div class="t" style="left:37.1px;top:424.5px;font-size:11px;color:#111;letter-spacing:-.25px">Print style</div>
<div class="t" style="left:117.1px;top:424.5px;font-size:11px;color:#111;letter-spacing:-.25px">ByColor</div>
<div class="a" style="left:32px;top:439.5px;width:79px;height:17px;background:#f0f0f0"></div>
<div class="a" style="left:112px;top:439.5px;width:79.5px;height:17px;background:#fff"></div>
<div class="t" style="left:37.1px;top:442.5px;font-size:11px;color:#111;letter-spacing:-.25px">Print style table</div>
<div class="t" style="left:117.1px;top:442.5px;font-size:11px;color:#111;letter-spacing:-.25px">None</div>
<div class="a" style="left:32px;top:457.5px;width:79px;height:17px;background:#f0f0f0"></div>
<div class="a" style="left:112px;top:457.5px;width:79.5px;height:17px;background:#f0f0f0"></div>
<div class="t" style="left:37.1px;top:460.5px;font-size:11px;color:#111;letter-spacing:-.25px">Print table att...</div>
<div class="t" style="left:117.1px;top:460.5px;font-size:11px;color:#111;letter-spacing:-.25px">Model</div>
<div class="a" style="left:32px;top:475.5px;width:79px;height:17px;background:#f0f0f0"></div>
<div class="a" style="left:112px;top:475.5px;width:79.5px;height:17px;background:#f0f0f0"></div>
<div class="t" style="left:37.1px;top:478.5px;font-size:11px;color:#111;letter-spacing:-.25px">Print table type</div>
<div class="t" style="left:117.1px;top:478.5px;font-size:11px;color:#111;letter-spacing:-.25px">Color-depend...</div>
<div class="a" style="left:16px;top:497.5px;width:176.5px;height:18px;background:linear-gradient(180deg,#bcbcbc 0,#a9a9a9 55%,#979797 100%);border-bottom:1px solid #8b8b8b"></div>
<div class="t" style="left:22.5px;top:500.7px;font-size:11.6px;font-weight:bold;color:#111;letter-spacing:-.35px;transform:scaleX(1.09);transform-origin:0 0">View</div>
<svg style="left:180px;top:503.5px" width="8" height="4"><path d="M0,3.6 L3.5,0 L7,3.6 Z" fill="#111"/></svg>
<div class="a" style="left:31px;top:515.5px;width:161.5px;height:90px;background:#a0a0a0"></div>
<div class="a" style="left:32px;top:515.5px;width:79px;height:17px;background:#f0f0f0"></div>
<div class="a" style="left:112px;top:515.5px;width:79.5px;height:17px;background:#f0f0f0"></div>
<div class="t" style="left:37.1px;top:518.5px;font-size:11px;color:#111;letter-spacing:-.25px">Center X</div>
<div class="t" style="left:117.1px;top:518.5px;font-size:11px;color:#111;letter-spacing:-.25px">62.5751</div>
<div class="a" style="left:32px;top:533.5px;width:79px;height:17px;background:#f0f0f0"></div>
<div class="a" style="left:112px;top:533.5px;width:79.5px;height:17px;background:#f0f0f0"></div>
<div class="t" style="left:37.1px;top:536.5px;font-size:11px;color:#111;letter-spacing:-.25px">Center Y</div>
<div class="t" style="left:117.1px;top:536.5px;font-size:11px;color:#111;letter-spacing:-.25px">-45.5023</div>
<div class="a" style="left:32px;top:551.5px;width:79px;height:17px;background:#f0f0f0"></div>
<div class="a" style="left:112px;top:551.5px;width:79.5px;height:17px;background:#f0f0f0"></div>
<div class="t" style="left:37.1px;top:554.5px;font-size:11px;color:#111;letter-spacing:-.25px">Center Z</div>
<div class="t" style="left:117.1px;top:554.5px;font-size:11px;color:#111;letter-spacing:-.25px">0</div>
<div class="a" style="left:32px;top:569.5px;width:79px;height:17px;background:#f0f0f0"></div>
<div class="a" style="left:112px;top:569.5px;width:79.5px;height:17px;background:#f0f0f0"></div>
<div class="t" style="left:37.1px;top:572.5px;font-size:11px;color:#111;letter-spacing:-.25px">Width</div>
<div class="t" style="left:117.1px;top:572.5px;font-size:11px;color:#111;letter-spacing:-.25px">156.0157</div>
<div class="a" style="left:32px;top:587.5px;width:79px;height:17px;background:#f0f0f0"></div>
<div class="a" style="left:112px;top:587.5px;width:79.5px;height:17px;background:#f0f0f0"></div>
<div class="t" style="left:37.1px;top:590.5px;font-size:11px;color:#111;letter-spacing:-.25px">Height</div>
<div class="t" style="left:117.1px;top:590.5px;font-size:11px;color:#111;letter-spacing:-.25px">60.1620</div>
<div class="a" style="left:16px;top:609.5px;width:176.5px;height:18px;background:linear-gradient(180deg,#bcbcbc 0,#a9a9a9 55%,#979797 100%);border-bottom:1px solid #8b8b8b"></div>
<div class="t" style="left:22.5px;top:612.7px;font-size:11.6px;font-weight:bold;color:#111;letter-spacing:-.35px;transform:scaleX(1.09);transform-origin:0 0">Misc</div>
<svg style="left:180px;top:615.5px" width="8" height="4"><path d="M0,3.6 L3.5,0 L7,3.6 Z" fill="#111"/></svg>
<div class="a" style="left:31px;top:627.5px;width:161.5px;height:18px;background:#a0a0a0"></div>
<div class="a" style="left:32px;top:627.5px;width:79px;height:17px;background:#f0f0f0"></div>
<div class="a" style="left:112px;top:627.5px;width:79.5px;height:17px;background:#fff"></div>
<div class="t" style="left:37.1px;top:630.5px;font-size:11px;color:#111;letter-spacing:-.25px">UCS icon On</div>
<div class="t" style="left:117.1px;top:630.5px;font-size:11px;color:#111;letter-spacing:-.25px">Yes</div>
<div class="a" style="left:200px;top:134px;width:4.5px;height:488px;background:linear-gradient(90deg,#5e5e5e,#6c6c6c 50%,#727272)"></div>
</div><div class="a" style="left:0;top:618.2px;width:200px;height:3px;background:#fbfbfb"></div><div class="a" style="left:200px;top:600px;width:4.5px;height:22px;background:#686868"></div>
<!-- ===== DRAWING AREA ===== -->
<div id="doctabs" class="a"></div>
<div id="docwhite" class="a"></div>
<svg style="left:208px;top:134px" width="130" height="20"><path d="M0,19.5 L17.5,2 Q18,1.5 19,1.5 H117.5 Q118.5,1.5 118.5,2.5 V19.5 Z" fill="#fff"/><path d="M0,19.5 L17.5,2" stroke="#8a8a8a" stroke-width=".8" fill="none"/><path d="M105.3,4.2 L112.7,11.4 M112.7,4.2 L105.3,11.4" stroke="#222" stroke-width="1.2" fill="none"/></svg>
<div class="t" style="left:229.3px;top:137.8px;font-size:11.15px;font-weight:bold;color:#111">Drawing1.dwg</div>
<svg style="left:1349px;top:141px" width="11" height="6"><path d="M0,0 H10 L5,5.5 Z" fill="#4a4a4a"/></svg>
<div id="black" class="a"><svg style="left:0;top:0" width="1154" height="444">
<rect x="21" y="0" width="1" height="444" fill="#292929"/>
<rect x="114" y="0" width="1" height="444" fill="#292929"/>
<rect x="206" y="0" width="1" height="444" fill="#292929"/>
<rect x="299" y="0" width="1" height="444" fill="#292929"/>
<rect x="391" y="0" width="1" height="444" fill="#292929"/>
<rect x="484" y="0" width="1" height="444" fill="#292929"/>
<rect x="576" y="0" width="1" height="444" fill="#292929"/>
<rect x="668" y="0" width="1" height="444" fill="#292929"/>
<rect x="761" y="0" width="1" height="444" fill="#292929"/>
<rect x="853" y="0" width="1" height="444" fill="#292929"/>
<rect x="946" y="0" width="1" height="444" fill="#292929"/>
<rect x="1038" y="0" width="1" height="444" fill="#292929"/>
<rect x="1131" y="0" width="1" height="444" fill="#292929"/>
<rect x="0" y="70" width="1154" height="1" fill="#292929"/>
<rect x="0" y="162" width="1154" height="1" fill="#292929"/>
<rect x="0" y="255" width="1154" height="1" fill="#292929"/>
<rect x="0" y="347" width="1154" height="1" fill="#292929"/>
<rect x="0" y="440" width="1154" height="1" fill="#292929"/>
<rect x="3" y="0" width="1" height="444" fill="#161616"/>
<rect x="40" y="0" width="1" height="444" fill="#161616"/>
<rect x="58" y="0" width="1" height="444" fill="#161616"/>
<rect x="77" y="0" width="1" height="444" fill="#161616"/>
<rect x="95" y="0" width="1" height="444" fill="#161616"/>
<rect x="132" y="0" width="1" height="444" fill="#161616"/>
<rect x="151" y="0" width="1" height="444" fill="#161616"/>
<rect x="169" y="0" width="1" height="444" fill="#161616"/>
<rect x="188" y="0" width="1" height="444" fill="#161616"/>
<rect x="225" y="0" width="1" height="444" fill="#161616"/>
<rect x="243" y="0" width="1" height="444" fill="#161616"/>
<rect x="262" y="0" width="1" height="444" fill="#161616"/>
<rect x="280" y="0" width="1" height="444" fill="#161616"/>
<rect x="317" y="0" width="1" height="444" fill="#161616"/>
<rect x="336" y="0" width="1" height="444" fill="#161616"/>
<rect x="354" y="0" width="1" height="444" fill="#161616"/>
<rect x="373" y="0" width="1" height="444" fill="#161616"/>
<rect x="410" y="0" width="1" height="444" fill="#161616"/>
<rect x="428" y="0" width="1" height="444" fill="#161616"/>
<rect x="447" y="0" width="1" height="444" fill="#161616"/>
<rect x="465" y="0" width="1" height="444" fill="#161616"/>
<rect x="502" y="0" width="1" height="444" fill="#161616"/>
<rect x="521" y="0" width="1" height="444" fill="#161616"/>
<rect x="539" y="0" width="1" height="444" fill="#161616"/>
<rect x="558" y="0" width="1" height="444" fill="#161616"/>
<rect x="595" y="0" width="1" height="444" fill="#161616"/>
<rect x="613" y="0" width="1" height="444" fill="#161616"/>
<rect x="631" y="0" width="1" height="444" fill="#161616"/>
<rect x="650" y="0" width="1" height="444" fill="#161616"/>
<rect x="687" y="0" width="1" height="444" fill="#161616"/>
<rect x="705" y="0" width="1" height="444" fill="#161616"/>
<rect x="724" y="0" width="1" height="444" fill="#161616"/>
<rect x="742" y="0" width="1" height="444" fill="#161616"/>
<rect x="779" y="0" width="1" height="444" fill="#161616"/>
<rect x="798" y="0" width="1" height="444" fill="#161616"/>
<rect x="816" y="0" width="1" height="444" fill="#161616"/>
<rect x="835" y="0" width="1" height="444" fill="#161616"/>
<rect x="872" y="0" width="1" height="444" fill="#161616"/>
<rect x="890" y="0" width="1" height="444" fill="#161616"/>
<rect x="909" y="0" width="1" height="444" fill="#161616"/>
<rect x="927" y="0" width="1" height="444" fill="#161616"/>
<rect x="964" y="0" width="1" height="444" fill="#161616"/>
<rect x="983" y="0" width="1" height="444" fill="#161616"/>
<rect x="1001" y="0" width="1" height="444" fill="#161616"/>
<rect x="1020" y="0" width="1" height="444" fill="#161616"/>
<rect x="1057" y="0" width="1" height="444" fill="#161616"/>
<rect x="1075" y="0" width="1" height="444" fill="#161616"/>
<rect x="1094" y="0" width="1" height="444" fill="#161616"/>
<rect x="1112" y="0" width="1" height="444" fill="#161616"/>
<rect x="1149" y="0" width="1" height="444" fill="#161616"/>
<rect x="0" y="15" width="1154" height="1" fill="#161616"/>
<rect x="0" y="33" width="1154" height="1" fill="#161616"/>
<rect x="0" y="52" width="1154" height="1" fill="#161616"/>
<rect x="0" y="88" width="1154" height="1" fill="#161616"/>
<rect x="0" y="107" width="1154" height="1" fill="#161616"/>
<rect x="0" y="125" width="1154" height="1" fill="#161616"/>
<rect x="0" y="144" width="1154" height="1" fill="#161616"/>
<rect x="0" y="181" width="1154" height="1" fill="#161616"/>
<rect x="0" y="199" width="1154" height="1" fill="#161616"/>
<rect x="0" y="218" width="1154" height="1" fill="#161616"/>
<rect x="0" y="236" width="1154" height="1" fill="#161616"/>
<rect x="0" y="273" width="1154" height="1" fill="#161616"/>
<rect x="0" y="292" width="1154" height="1" fill="#161616"/>
<rect x="0" y="310" width="1154" height="1" fill="#161616"/>
<rect x="0" y="329" width="1154" height="1" fill="#161616"/>
<rect x="0" y="366" width="1154" height="1" fill="#161616"/>
<rect x="0" y="384" width="1154" height="1" fill="#161616"/>
<rect x="0" y="403" width="1154" height="1" fill="#161616"/>
<rect x="0" y="421" width="1154" height="1" fill="#161616"/>
<g transform="translate(-208,-156)" fill="none" stroke="#fff" stroke-width="1" shape-rendering="crispEdges">
<path d="M552.5,326.3 L519.6,326.3 L519.4,325.9 L499.7,325.4 L482.3,323.8 L471.0,322.8 L458.0,322.0 L460.5,327.0 L462.6,334.4 L463.6,342.0 L464.4,351.5 M552.5,326.3 L590.5,326.3 L590.6,325.2 L613.5,324.5 L629.7,323.9 L646.7,323.4 L644.5,328.0 L642.8,333.2 L641.5,338.0 L640.9,343.1 L640.3,351.2 M456.8,353.1 L460.0,351.8 L464.2,351.4 L468.0,352.0 L472.3,353.7 L475.0,355.5 L477.3,357.4 L481.0,362.0 L486.9,369.6 M648.2,353.1 L645.0,351.8 L640.8,351.4 L637.0,352.0 L632.7,353.7 L630.0,355.5 L627.7,357.4 L624.0,362.0 L618.1,369.6 M456.8,353.1 L455.5,358.0 L455.7,362.0 L457.4,368.0 L460.0,373.0 L463.6,378.0 M648.2,353.1 L649.5,358.0 L649.3,362.0 L647.6,368.0 L645.0,373.0 L641.4,378.0 M457.0,353.5 L467.3,364.3 L473.6,374.2 L477.3,380.0 L481.3,386.5 L483.0,392.0 L483.5,395.6 L490.4,402.4 L492.2,408.6 M648.0,353.5 L637.7,364.3 L631.4,374.2 L627.7,380.0 L623.7,386.5 L622.0,392.0 L621.5,395.6 L614.6,402.4 L612.8,408.6 M488.5,360.5 L492.2,359.9 L498.4,361.2 L504.7,365.5 L509.6,375.5 L511.5,380.0 L513.4,386.7 L515.3,397.4 L515.3,404.9 L513.1,409.2 M616.5,360.5 L612.8,359.9 L606.6,361.2 L600.3,365.5 L595.4,375.5 L593.5,380.0 L591.6,386.7 L589.7,397.4 L589.7,404.9 L591.9,409.2 M488.5,360.5 L487.2,366.8 L488.5,373.0 L492.2,380.0 L493.5,384.2 L497.8,394.3 L498.7,402.4 L496.0,409.2 M616.5,360.5 L617.8,366.8 L616.5,373.0 L612.8,380.0 L611.5,384.2 L607.2,394.3 L606.3,402.4 L609.0,409.2 M498.7,402.4 L504.0,409.2 M606.3,402.4 L601.0,409.2 M489.0,361.2 L494.7,368.0 L497.8,378.0 L499.0,380.0 L504.0,388.7 L504.7,399.3 L507.8,403.6 L509.6,409.2 M616.0,361.2 L610.3,368.0 L607.2,378.0 L606.0,380.0 L601.0,388.7 L600.3,399.3 L597.2,403.6 L595.4,409.2 M481.0,480.4 L452.4,480.4 L449.5,477.3 L449.5,437.2 L448.7,429.8 L445.6,411.1 L442.4,399.9 L439.3,390.0 L439.3,384.2 L442.4,379.2 L446.5,375.8 L451.2,374.2 L455.0,374.6 L458.6,376.1 L464.8,379.8 L471.0,385.4 L472.9,388.7 L474.8,392.9 L477.9,402.4 L479.8,409.9 M624.0,480.4 L652.6,480.4 L655.5,477.3 L655.5,437.2 L656.3,429.8 L659.4,411.1 L662.6,399.9 L665.7,390.0 L665.7,384.2 L662.6,379.2 L658.5,375.8 L653.8,374.2 L650.0,374.6 L646.4,376.1 L640.2,379.8 L634.0,385.4 L632.1,388.7 L630.2,392.9 L627.1,402.4 L625.2,409.9 M479.2,403.6 L484.8,408.9 M625.8,403.6 L620.2,408.9 M483.8,436.6 L483.8,466.1 L481.6,480.4 M621.2,436.6 L621.2,466.1 L623.4,480.4 M481.1,480.5 L483.1,498.7 M623.9,480.5 L621.9,498.7 M491.0,480.5 L488.0,498.7 M614.0,480.5 L617.0,498.7 M484.1,481.2 L485.1,498.7 M620.9,481.2 L619.9,498.7 M487.8,481.2 L486.0,498.7 M617.2,481.2 L619.0,498.7 M482.3,481.0 L483.6,498.7 M622.7,481.0 L621.4,498.7 M489.6,481.0 L487.2,498.7 M615.4,481.0 L617.8,498.7 M481.1,499.5 L490.0,499.5 L494.0,502.5 L477.0,502.5 L481.1,499.5 M623.9,499.5 L615.0,499.5 L611.0,502.5 L628.0,502.5 L623.9,499.5 M491.0,480.5 L614.0,480.5 M491.0,482.5 L614.0,482.5 M491.0,487.5 L614.0,487.5"/>
<rect x="478.5" y="409.5" width="148" height="27" rx="5.5" ry="6"/>
<g transform="translate(365,0)"><path d="M552.5,326.3 L519.6,326.3 L519.4,325.9 L499.7,325.4 L482.3,323.8 L471.0,322.8 L458.0,322.0 L460.5,327.0 L462.6,334.4 L463.6,342.0 L464.4,351.5 M552.5,326.3 L590.5,326.3 L590.6,325.2 L613.5,324.5 L629.7,323.9 L646.7,323.4 L644.5,328.0 L642.8,333.2 L641.5,338.0 L640.9,343.1 L640.3,351.2 M456.8,353.1 L460.0,351.8 L464.2,351.4 L468.0,352.0 L472.3,353.7 L475.0,355.5 L477.3,357.4 L481.0,362.0 L486.9,369.6 M648.2,353.1 L645.0,351.8 L640.8,351.4 L637.0,352.0 L632.7,353.7 L630.0,355.5 L627.7,357.4 L624.0,362.0 L618.1,369.6 M456.8,353.1 L455.5,358.0 L455.7,362.0 L457.4,368.0 L460.0,373.0 L463.6,378.0 M648.2,353.1 L649.5,358.0 L649.3,362.0 L647.6,368.0 L645.0,373.0 L641.4,378.0 M457.0,353.5 L467.3,364.3 L473.6,374.2 L477.3,380.0 L481.3,386.5 L483.0,392.0 L483.5,395.6 L490.4,402.4 L492.2,408.6 M648.0,353.5 L637.7,364.3 L631.4,374.2 L627.7,380.0 L623.7,386.5 L622.0,392.0 L621.5,395.6 L614.6,402.4 L612.8,408.6 M488.5,360.5 L492.2,359.9 L498.4,361.2 L504.7,365.5 L509.6,375.5 L511.5,380.0 L513.4,386.7 L515.3,397.4 L515.3,404.9 L513.1,409.2 M616.5,360.5 L612.8,359.9 L606.6,361.2 L600.3,365.5 L595.4,375.5 L593.5,380.0 L591.6,386.7 L589.7,397.4 L589.7,404.9 L591.9,409.2 M488.5,360.5 L487.2,366.8 L488.5,373.0 L492.2,380.0 L493.5,384.2 L497.8,394.3 L498.7,402.4 L496.0,409.2 M616.5,360.5 L617.8,366.8 L616.5,373.0 L612.8,380.0 L611.5,384.2 L607.2,394.3 L606.3,402.4 L609.0,409.2 M498.7,402.4 L504.0,409.2 M606.3,402.4 L601.0,409.2 M489.0,361.2 L494.7,368.0 L497.8,378.0 L499.0,380.0 L504.0,388.7 L504.7,399.3 L507.8,403.6 L509.6,409.2 M616.0,361.2 L610.3,368.0 L607.2,378.0 L606.0,380.0 L601.0,388.7 L600.3,399.3 L597.2,403.6 L595.4,409.2 M481.0,480.4 L452.4,480.4 L449.5,477.3 L449.5,437.2 L448.7,429.8 L445.6,411.1 L442.4,399.9 L439.3,390.0 L439.3,384.2 L442.4,379.2 L446.5,375.8 L451.2,374.2 L455.0,374.6 L458.6,376.1 L464.8,379.8 L471.0,385.4 L472.9,388.7 L474.8,392.9 L477.9,402.4 L479.8,409.9 M624.0,480.4 L652.6,480.4 L655.5,477.3 L655.5,437.2 L656.3,429.8 L659.4,411.1 L662.6,399.9 L665.7,390.0 L665.7,384.2 L662.6,379.2 L658.5,375.8 L653.8,374.2 L650.0,374.6 L646.4,376.1 L640.2,379.8 L634.0,385.4 L632.1,388.7 L630.2,392.9 L627.1,402.4 L625.2,409.9 M479.2,403.6 L484.8,408.9 M625.8,403.6 L620.2,408.9 M483.8,436.6 L483.8,466.1 L481.6,480.4 M621.2,436.6 L621.2,466.1 L623.4,480.4 M481.1,480.5 L483.1,498.7 M623.9,480.5 L621.9,498.7 M491.0,480.5 L488.0,498.7 M614.0,480.5 L617.0,498.7 M484.1,481.2 L485.1,498.7 M620.9,481.2 L619.9,498.7 M487.8,481.2 L486.0,498.7 M617.2,481.2 L619.0,498.7 M482.3,481.0 L483.6,498.7 M622.7,481.0 L621.4,498.7 M489.6,481.0 L487.2,498.7 M615.4,481.0 L617.8,498.7 M481.1,499.5 L490.0,499.5 L494.0,502.5 L477.0,502.5 L481.1,499.5 M623.9,499.5 L615.0,499.5 L611.0,502.5 L628.0,502.5 L623.9,499.5 M491.0,480.5 L614.0,480.5 M491.0,482.5 L614.0,482.5 M491.0,487.5 L614.0,487.5"/><rect x="478.5" y="409.5" width="148" height="27" rx="5.5" ry="6"/></g>
<path d="M709.5,231.5 L762.6,231.5 M709.5,233.5 L762.6,233.5 M688.3,280.5 L783.4,280.5 M688.3,283.5 L783.4,283.5 L783.4,280.5 M688.3,283.5 L688.3,280.5 M709.5,231.5 L688.8,280.5 M762.6,231.5 L783.0,280.5 M719.3,233.5 L703.3,280.5 M728.7,233.5 L719.4,280.5 M736.5,233.5 L736.5,280.5 M744.6,233.5 L752.7,280.5 M753.3,233.5 L769.5,280.5 M732.5,283.5 L732.5,295.4 M739.5,283.5 L739.5,295.4 M730.6,361.6 L729.7,339.8 L727.8,313.6 L727.2,295.5 L744.8,295.5 L744.6,311.8 L742.7,339.8 L741.7,361.6 M725.9,361.5 L745.8,361.5 L752.0,363.5 L758.9,365.5 L714.1,365.5 L720.9,363.5 L725.9,361.5 M720.9,363.5 L752.0,363.5"/>
<rect x="668.5" y="366.5" width="135.5" height="6.5" rx="2.5"/>
<rect x="671.5" y="373.5" width="129.5" height="4"/>
<rect x="670" y="377.5" width="132" height="2"/>
<rect x="682" y="379.5" width="1" height="100" fill="#fff" stroke="none"/>
<rect x="736" y="379.5" width="2" height="100" fill="#fff" stroke="none"/>
<rect x="682.5" y="429" width="107" height="2" fill="#fff" stroke="none"/>
<path d="M674.5,379.5 L674.5,479.5 M798.5,379.5 L798.5,479.5 M789.5,379.5 L789.5,479.5 M672.4,479.5 L800.3,479.5 L802.2,481.4 L802.2,489.3 L669.5,489.3 L669.5,487.5 L670.5,486.0 L670.5,481.4 L672.4,479.5 M670.5,485.5 L802.2,485.5 M670.5,489.5 L670.5,502.3 L801.2,502.3 L801.2,489.5"/>
</g>
<g transform="translate(-208,-156)" fill="none" stroke-width="1" shape-rendering="crispEdges">
<path d="M407.5,469 V567" stroke="#00ff00"/>
<path d="M358,517.5 H456" stroke="#ff0000"/>
<rect x="397.5" y="507.5" width="20" height="20" stroke="#ff0000"/>
<path d="M227.5,577 V543.5 M227.5,531.5 L223.5,543.5 H231.5 Z" stroke="#00ff00"/>
<path d="M227.5,581.5 H265.5 M277.5,581.5 L265.5,577.5 V585.5 Z" stroke="#ff0000"/>
<rect x="223.5" y="577.5" width="8" height="8" stroke="#fff"/>
<path d="M224.5,514.5 L227.5,518.5 L230.5,514.5 M227.5,518.5 V522.5" stroke="#fff"/>
<path d="M287.5,577.5 L293.5,585.5 M293.5,577.5 L287.5,585.5" stroke="#fff"/>
</g>
</svg></div>
<div id="laybar" class="a"></div>
<div class="a" style="left:1364.7px;top:134px;width:1.3px;height:487px;background:#9a9c9e"></div>
<svg style="left:208px;top:600px" width="260" height="18">
<rect x="0" y="14.3" width="63" height="1.5" fill="#a8a8a8"/>
<path d="M64.4,0 H118.6 L112,16 H71.4 Z" fill="#fff"/>
<g fill="none" stroke="#1a1a1a" stroke-width="1"><path d="M65,1.5 L71,15.6 M117.9,1.5 L112,15.8 M115.6,8 L120,15.8 M177.4,1.5 L170.5,15.8 M174.2,8 L178.6,15.8 M235.8,2.4 L229.8,15.8"/></g>
<g stroke="#fff" stroke-width="1"><path d="M0.5,1 V14 M16.5,1 V14 M32.5,1 V14 M47.5,1 V14"/></g>
<g stroke="#a8a8a8" stroke-width="1"><path d="M15.5,1 V14 M31.5,1 V14 M46.5,1 V14 M62.5,1 V14"/></g>
<g fill="#111"><path d="M4.5,3.5 h1.5 v8 h-1.5z M11.5,3.5 v8 l-4.6,-4z"/><path d="M26,3.5 v8 l-4.6,-4z"/><path d="M37,3.5 v8 l4.6,-4z"/><path d="M51,3.5 v8 l4.6,-4z M56.3,3.5 h1.5 v8 h-1.5z"/></g>
</svg>
<div class="t lt" style="left:283.5px;font-weight:bold;font-size:11.6px;letter-spacing:-.2px">Model</div>
<div class="t lt" style="left:334px">Layout1</div>
<div class="t lt" style="left:393.5px">Layout2</div>

<!-- ===== COMMAND ===== -->
<div id="cmdsplit" class="a"></div>
<div id="cmdleft" class="a"></div>
<div id="cmdhist" class="a"></div>
<div id="cmdline" class="a"></div>
<svg style="left:5px;top:631.5px" width="12" height="32"><path d="M1.5,1.5 L9,9 M9,1.5 L1.5,9" stroke="#5c5c5c" stroke-width="1.2" fill="none"/><path d="M1,21.8 H10.5 L5.7,26.8 Z" fill="#666"/></svg>
<div class="t cm" style="top:629.1px">Scale/X/Y/Z/Rotation/Multiple/&lt;Insertion point for block&gt;:</div>
<div class="t cm" style="top:643.1px">Corner/XYZ/X scale factor &lt;1.000000&gt;: 1</div>
<div class="t cm" style="top:657.1px">Y scale factor:  &lt; Equal to X scale (1.000000)&gt;: 1</div>
<div class="t cm" style="top:671.1px">Rotation angle for block &lt;0&gt;: 0</div>
<div class="t" style="left:25.5px;top:689.5px;font-family:'Liberation Mono',monospace;font-size:11.3px;font-weight:normal;color:#000;letter-spacing:.1px;-webkit-text-stroke:.25px #000">Command:</div>
<div class="a" style="left:1348px;top:627px;width:15px;height:57px;background:#f0f0f0"></div>
<div class="a" style="left:1348.5px;top:652px;width:14px;height:13.5px;border:1px solid #9a9a9a;border-radius:2px;background:linear-gradient(90deg,#f4f4f4,#dcdcdc 60%,#cfcfcf)"></div>
<svg style="left:1352px;top:634px" width="9" height="46"><path d="M0,5 L4.3,0.8 L8.6,5 Z" fill="#444"/><path d="M0,39.5 H8.6 L4.3,43.8 Z" fill="#444"/></svg>

<!-- ===== STATUS BAR ===== -->
<div id="status" class="a"></div>
<div class="t st" style="left:4.5px">Ready</div>
<div class="sep" style="left:698px"></div><div class="sep" style="left:709px"></div>
<div class="t st" style="left:713.3px">11.4712,-64.3621,0.0000</div>
<div class="sep" style="left:918.5px"></div>
<div class="t st" style="left:921.8px">BMP</div>
<div class="sep" style="left:946.5px"></div>
<div class="t st" style="left:969.8px">1:1</div>
<div class="sep" style="left:989px"></div><div class="sep" style="left:1010.5px"></div><div class="sep" style="left:1033px"></div><div class="sep" style="left:1054px"></div><div class="sep" style="left:1076.5px"></div><div class="sep" style="left:1098.5px"></div><div class="sep" style="left:1120.5px"></div><div class="sep" style="left:1142.5px"></div><div class="sep" style="left:1164.5px"></div><div class="sep" style="left:1186.5px"></div>
<div class="t st" style="left:1189.3px;font-size:11.2px;top:713px;letter-spacing:-.1px">MODEL</div>
<div class="sep" style="left:1230.5px"></div>
<div class="t st" style="left:1233.5px;font-size:11.2px;top:713px;color:#8a8a8a;transform:scaleX(.835);transform-origin:0 0">TABLET</div>
<div class="sep" style="left:1271.5px"></div><div class="sep" style="left:1294.5px"></div><div class="sep" style="left:1315.5px"></div><div class="sep" style="left:1337.5px"></div>
<svg class="a" style="left:0;top:0" width="1366" height="727"><defs><radialGradient id="gchk" cx=".4" cy=".3" r=".8"><stop offset="0" stop-color="#8fe27a"/><stop offset=".5" stop-color="#3cb53a"/><stop offset="1" stop-color="#1d7a22"/></radialGradient></defs>
<path d="M959,713.5 V719 M959,716.8 L954.7,723 M959,716.8 L963.3,723" stroke="#fff" stroke-width="2.1" fill="none" stroke-linejoin="round"/>
<rect x="991.8" y="709.7" width="16.4" height="16" fill="#6c6c6c"/>
<path d="M997.5,713.5 V719 M997.5,716.8 L993.2,723 M997.5,716.8 L1001.8,723" stroke="#fff" stroke-width="2.1" fill="none" stroke-linejoin="round"/>
<circle cx="1003.6" cy="717.6" r="3.9" fill="#f4e84a" stroke="#b8a820" stroke-width=".6"/><rect x="1002" y="721.2" width="3.2" height="2.4" fill="#c8c8c8"/>
<path d="M1019.8,713.5 V719 M1019.8,716.8 L1015.5,723 M1019.8,716.8 L1024.1,723" stroke="#fff" stroke-width="2.1" fill="none" stroke-linejoin="round"/>
<path d="M1028.5,713 L1024,718.3 H1026.8 L1025,722 L1030.5,716.6 H1027.6 L1029.6,713 Z" fill="#f5a623"/>
<g stroke="#e8e8e8" stroke-width="1" fill="none"><path d="M1036.2,710.2 V725.6"/><path d="M1036.2,710.2 H1051.7"/><path d="M1039.3,710.2 V725.6"/><path d="M1036.2,713.3 H1051.7"/><path d="M1042.4,710.2 V725.6"/><path d="M1036.2,716.4 H1051.7"/><path d="M1045.5,710.2 V725.6"/><path d="M1036.2,719.4 H1051.7"/><path d="M1048.6,710.2 V725.6"/><path d="M1036.2,722.5 H1051.7"/><path d="M1051.7,710.2 V725.6"/><path d="M1036.2,725.6 H1051.7"/></g>
<path d="M1036,719.4 H1047" stroke="#ff2020" stroke-width="1.3"/><path d="M1042.4,714.5 V721.5" stroke="#ff2020" stroke-width="1.3"/><path d="M1042.4,721.5 V725.6" stroke="#20d020" stroke-width="1.3"/>
<rect x="1058" y="710.2" width="16" height="15.6" fill="#555"/><g stroke="#9c9c9c" stroke-width="1.2" fill="none"><path d="M1058.6,710.2 V725.8"/><path d="M1058,710.8 H1074"/><path d="M1061.6,710.2 V725.8"/><path d="M1058,713.8 H1074"/><path d="M1064.6,710.2 V725.8"/><path d="M1058,716.8 H1074"/><path d="M1067.6,710.2 V725.8"/><path d="M1058,719.8 H1074"/><path d="M1070.6,710.2 V725.8"/><path d="M1058,722.8 H1074"/><path d="M1073.6,710.2 V725.8"/><path d="M1058,725.8 H1074"/></g>
<path d="M1082.7,710.6 V723.2" stroke="#20d020" stroke-width="1.4"/><path d="M1082,723.2 H1096.2" stroke="#ff2020" stroke-width="1.4"/><path d="M1086.4,716.4 H1091.4 V723" stroke="#fff" stroke-width="1.3" fill="none"/>
<rect x="1101.8" y="709.7" width="17.2" height="16" fill="#6c6c6c"/><circle cx="1110" cy="717.8" r="7" fill="none" stroke="#e8e8e8" stroke-width="1.4"/><path d="M1118,711.8 L1110,719.3 H1118.5" stroke="#ff2020" stroke-width="1.3" fill="none"/>
<rect x="1124.2" y="709.7" width="16.2" height="16" fill="#6c6c6c"/><path d="M1130.3,709.7 V725.7 M1124.2,716.3 H1140.4" stroke="#fff" stroke-width="1.3"/><rect x="1129" y="715" width="2.6" height="2.6" fill="#fff" stroke="#ff2020" stroke-width="1"/>
<rect x="1146.5" y="709.7" width="16" height="16" fill="#6c6c6c"/><path d="M1147.5,724 L1161.7,710.6 M1147.5,724 H1160.5" stroke="#fff" stroke-width="1.2" fill="none"/><path d="M1157,714.5 V724" stroke="#ddd" stroke-width="1" stroke-dasharray="1,1"/>
<path d="M1176,710 V724.6 M1168.8,717.3 H1183.4" stroke="#fff" stroke-width="2"/>
<path d="M1281.44,712.09 L1281.46,709.63 L1284.34,709.63 L1284.36,712.09 L1285.83,712.70 L1287.59,710.97 L1289.63,713.01 L1287.90,714.77 L1288.51,716.24 L1290.97,716.26 L1290.97,719.14 L1288.51,719.16 L1287.90,720.63 L1289.63,722.39 L1287.59,724.43 L1285.83,722.70 L1284.36,723.31 L1284.34,725.77 L1281.46,725.77 L1281.44,723.31 L1279.97,722.70 L1278.21,724.43 L1276.17,722.39 L1277.90,720.63 L1277.29,719.16 L1274.83,719.14 L1274.83,716.26 L1277.29,716.24 L1277.90,714.77 L1276.17,713.01 L1278.21,710.97 L1279.97,712.70 Z M1285.60,717.70 A2.7,2.7 0 1,0 1280.20,717.70 A2.7,2.7 0 1,0 1285.60,717.70 Z" fill="#2090e8" fill-rule="evenodd"/>
<rect x="1298.1" y="712.2" width="9.3" height="6" fill="#fff"/><rect x="1298.1" y="712.2" width="9.3" height="1.8" fill="#2a6ad0"/>
<rect x="1302.5" y="716.6" width="9.5" height="7.6" fill="#fff" stroke="#333" stroke-width=".6"/><rect x="1302.5" y="716.6" width="9.5" height="2" fill="#2a6ad0"/>
<circle cx="1326.8" cy="717.7" r="7.4" fill="#fff" stroke="#9a9a9a" stroke-width="1.6"/><path d="M1321.8,714.8 L1327.6,722.4" stroke="#1e6ad0" stroke-width="1.8"/>
<circle cx="1349" cy="718" r="8.2" fill="url(#gchk)"/><path d="M1344.6,718.2 L1347.8,721.6 L1353.6,714.6" stroke="#fff" stroke-width="2.2" fill="none"/>
</svg>

<!-- ===== OVERLAY ===== -->
<div class="a" style="left:17px;top:617px;width:496.5px;height:90.5px;border:4px solid #ff0000"></div>
<div class="big" style="left:673.3px;top:609.3px;transform:translateX(-50%) scaleX(.942)">INPUT THE VALUES</div>
<div class="big" style="left:667.2px;top:645.5px;transform:translateX(-50%) scaleX(.907)">AS PER THE</div>
<div class="big" style="left:661.6px;top:681.8px;transform:translateX(-50%) scaleX(.967)">REQUIREMENT</div>
</body></html>
